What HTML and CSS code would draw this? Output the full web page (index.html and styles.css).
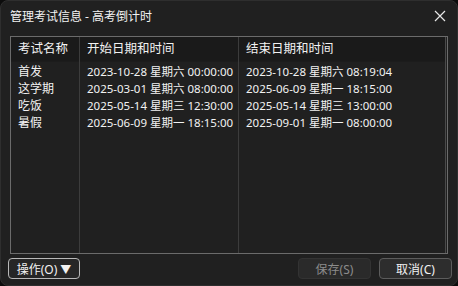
FILE: index.html
```html
<!DOCTYPE html>
<html lang="zh-CN">
<head>
    <meta charset="UTF-8">
    <title>管理考试信息 - 高考倒计时</title>
    <link rel="stylesheet" href="styles.css">
</head>
<body>
    <div class="window">
        <div class="titlebar">
            <span class="title">管理考试信息 - 高考倒计时</span>
            <svg class="close" width="12" height="12" viewBox="0 0 12 12">
                <path d="M1 1 L11 11 M11 1 L1 11" stroke="#e6e6e6" stroke-width="1.2" fill="none"/>
            </svg>
        </div>

        <div class="list">
            <div class="col col-name">
                <div class="head">考试名称</div>
                <div class="cell">首发</div>
                <div class="cell">这学期</div>
                <div class="cell">吃饭</div>
                <div class="cell">暑假</div>
            </div>
            <div class="col col-start">
                <div class="head">开始日期和时间</div>
                <div class="cell date">2023-10-28 星期六 00:00:00</div>
                <div class="cell date">2025-03-01 星期六 08:00:00</div>
                <div class="cell date">2025-05-14 星期三 12:30:00</div>
                <div class="cell date">2025-06-09 星期一 18:15:00</div>
            </div>
            <div class="col col-end">
                <div class="head">结束日期和时间</div>
                <div class="cell date">2023-10-28 星期六 08:19:04</div>
                <div class="cell date">2025-06-09 星期一 18:15:00</div>
                <div class="cell date">2025-05-14 星期三 13:00:00</div>
                <div class="cell date">2025-09-01 星期一 08:00:00</div>
            </div>
        </div>

        <div class="footer">
            <div class="btn btn-menu">操作(O) <span class="arrow">▼</span></div>
            <div class="spacer"></div>
            <div class="btn btn-disabled">保存(S)</div>
            <div class="btn">取消(C)</div>
        </div>
    </div>
</body>
</html>
```

FILE: styles.css
```css
html, body {
    margin: 0;
    padding: 0;
    background-color: #0c0c0c;
}

body {
    font-family: "Noto Sans", "Noto Sans CJK SC", sans-serif;
    font-size: 12px;
    color: #f2f2f2;
}

.window {
    width: 458px;
    height: 286px;
    box-sizing: border-box;
    background-color: #202020;
    border: 1px solid #2e2e2e;
    border-radius: 8px;
    display: flex;
    flex-direction: column;
    overflow: hidden;
}

.titlebar {
    height: 29px;
    padding: 0 11px 0 9px;
    display: flex;
    align-items: center;
    justify-content: space-between;
    flex-shrink: 0;
}

.title {
    font-size: 12px;
}

.list {
    margin: 6px 9px 0 9px;
    height: 218px;
    box-sizing: border-box;
    border: 1px solid #6b6b6b;
    display: flex;
    flex-shrink: 0;
}

.col {
    display: flex;
    flex-direction: column;
    border-right: 1px solid #3c3c3c;
}

.col-name {
    width: 68px;
}

.col-start {
    width: 158px;
}

.col-end {
    flex: 1;
    border-right: 1px solid #4a4a4a;
    margin-right: 1px;
}

.head {
    height: 24px;
    line-height: 24px;
    padding-left: 7px;
    background-color: #1a1a1a;
    border-bottom: 1px solid #1c1c1c;
    font-size: 12.5px;
    white-space: nowrap;
}

.cell {
    height: 17px;
    line-height: 17px;
    padding-left: 7px;
    white-space: nowrap;
}

.date {
    font-size: 11.5px;
}

.head + .cell {
    margin-top: 1px;
}

.footer {
    display: flex;
    align-items: center;
    gap: 8px;
    padding: 4px 5px 0 7px;
}

.spacer {
    flex: 1;
}

.btn {
    height: 19px;
    width: 71px;
    border: 1px solid #5c5c5c;
    border-radius: 4px;
    background-color: #2d2d2d;
    display: flex;
    align-items: center;
    justify-content: center;
    font-size: 12px;
}

.btn-menu {
    width: 70px;
    border-color: #b8b8b8;
    background-color: #262626;
    gap: 3px;
}

.arrow {
    font-size: 11px;
}

.btn-disabled {
    color: #8c8c8c;
    border-color: #333333;
    background-color: #2a2a2a;
}
```
